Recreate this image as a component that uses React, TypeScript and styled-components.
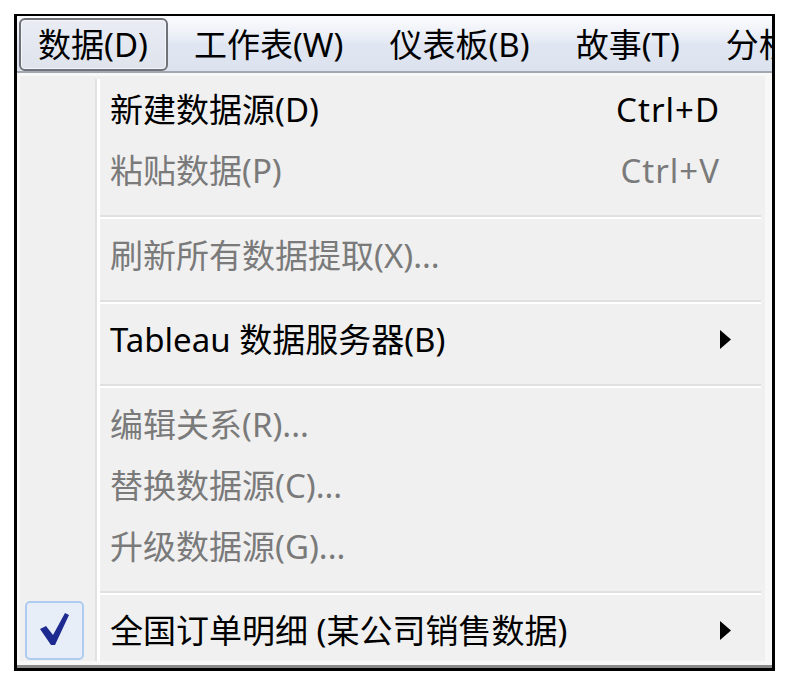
import React from 'react';
import styled, { createGlobalStyle } from 'styled-components';

const GlobalStyle = createGlobalStyle`
  html, body {
    margin: 0;
    padding: 0;
    background: #ffffff;
  }
  body {
    font-family: "Noto Sans", "Noto Sans CJK SC", sans-serif;
  }
`;

const Frame = styled.div`
  box-sizing: border-box;
  width: 761px;
  margin: 14px 0 0 14px;
  border: 3px solid #000;
  border-top-width: 2px;
  font-size: 33px;
  line-height: 1;
`;

const MenuBar = styled.div`
  display: flex;
  align-items: stretch;
  gap: 6px;
  height: 57px;
  box-sizing: border-box;
  padding: 2px 0 0 2px;
  overflow: hidden;
  white-space: nowrap;
  background: linear-gradient(#fbfcfe 0%, #eef1f8 30%, #dfe5f1 55%, #dce3ef 100%);
  border-bottom: 2px solid #a3a7b0;
`;

const BarItem = styled.div<{ $open?: boolean }>`
  display: flex;
  align-items: center;
  flex: none;
  padding: 0 20px 0 ${(p) => (p.$open ? 17 : 20)}px;
  color: #000;
  ${(p) =>
    p.$open &&
    `
    border: 2px solid #6f7278;
    border-radius: 6px;
    padding-right: 18px;
    background: linear-gradient(#e9ecf3 0%, #dfe3ec 100%);
    box-shadow: inset 0 0 0 1px #f4f6fa;
  `}
`;

const Dropdown = styled.div`
  background: #f8f8f8;
  padding: 3px 7px 4px 3px;
  border-bottom: 3px solid #8a8a8a;
`;

const Panel = styled.div`
  background: #f0f0f0;
  padding-top: 3px;
`;

const Row = styled.div<{ $disabled?: boolean }>`
  display: flex;
  align-items: center;
  height: 61px;
  padding-right: 34px;
  color: ${(p) => (p.$disabled ? '#7a7a7a' : '#000')};
`;

const Gutter = styled.div`
  flex: none;
  align-self: stretch;
  display: flex;
  align-items: center;
  width: 80px;
  box-sizing: border-box;
  padding-left: 5px;
  background: linear-gradient(
    to right,
    transparent 75px,
    #e2e2e2 75px,
    #e2e2e2 77.5px,
    #ffffff 77.5px,
    #ffffff 80px
  );
`;

const Label = styled.span`
  flex: 1;
  padding-left: 10px;
  white-space: nowrap;
`;

const Shortcut = styled.span`
  flex: none;
  letter-spacing: 1px;
`;

const ArrowSlot = styled.span`
  flex: none;
  display: flex;
  width: 11px;
  justify-content: center;
`;

const SeparatorRow = styled.div`
  display: flex;
  height: 23.5px;
`;

const SeparatorLine = styled.div`
  flex: 1;
  margin: 14px 4px 0 0;
  height: 0;
  border-top: 2.3px solid #e0e0e0;
  border-bottom: 2.7px solid #ffffff;
`;

const CheckBox = styled.div`
  display: flex;
  align-items: center;
  justify-content: center;
  width: 59px;
  height: 59px;
  box-sizing: border-box;
  border: 2px solid #aecbf0;
  border-radius: 5px;
  background: #e8eef8;
`;

const Arrow = () => (
  <svg width="11" height="19" viewBox="0 0 11 19">
    <polygon points="0,0 11,9.5 0,19" fill="#000" />
  </svg>
);

const Check = () => (
  <svg width="55" height="55" viewBox="2 2 55 55">
    <polygon points="15,28 21,25 28,34 40,12 44,14 30,44 26,44" fill="#1d2a8f" />
  </svg>
);

type Item = {
  label: string;
  shortcut?: string;
  disabled?: boolean;
  submenu?: boolean;
  checked?: boolean;
};

const groups: Item[][] = [
  [
    { label: '新建数据源(D)', shortcut: 'Ctrl+D' },
    { label: '粘贴数据(P)', shortcut: 'Ctrl+V', disabled: true },
  ],
  [{ label: '刷新所有数据提取(X)...', disabled: true }],
  [{ label: 'Tableau 数据服务器(B)', submenu: true }],
  [
    { label: '编辑关系(R)...', disabled: true },
    { label: '替换数据源(C)...', disabled: true },
    { label: '升级数据源(G)...', disabled: true },
  ],
  [{ label: '全国订单明细 (某公司销售数据)', submenu: true, checked: true }],
];

const barItems = ['数据(D)', '工作表(W)', '仪表板(B)', '故事(T)', '分析(A)'];

export default function App() {
  return (
    <>
      <GlobalStyle />
      <Frame>
        <MenuBar>
          {barItems.map((t, i) => (
            <BarItem key={t} $open={i === 0}>
              {t}
            </BarItem>
          ))}
        </MenuBar>
        <Dropdown>
          <Panel>
            {groups.map((group, gi) => (
              <React.Fragment key={gi}>
                {gi > 0 && (
                  <SeparatorRow>
                    <Gutter />
                    <SeparatorLine />
                  </SeparatorRow>
                )}
                {group.map((item) => (
                  <Row key={item.label} $disabled={item.disabled}>
                    <Gutter>
                      {item.checked && (
                        <CheckBox>
                          <Check />
                        </CheckBox>
                      )}
                    </Gutter>
                    <Label>{item.label}</Label>
                    {item.shortcut && <Shortcut>{item.shortcut}</Shortcut>}
                    <ArrowSlot>{item.submenu && <Arrow />}</ArrowSlot>
                  </Row>
                ))}
              </React.Fragment>
            ))}
          </Panel>
        </Dropdown>
      </Frame>
    </>
  );
}
